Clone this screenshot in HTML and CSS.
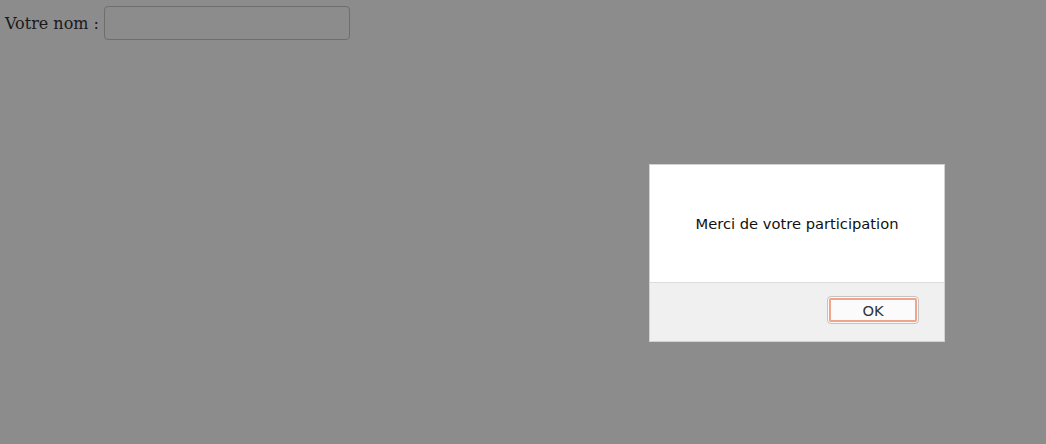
FILE: index.html
```html
<!DOCTYPE html>
<html lang="fr">
<head>
<meta charset="utf-8">
<link rel="stylesheet" href="styles.css">
</head>
<body>
<div class="page">
  <label class="field">Votre nom : <input class="name-input" type="text"></label>
</div>
<div class="dialog">
  <div class="dialog-body">Merci de votre participation</div>
  <div class="dialog-footer"><button class="ok-btn">OK</button></div>
</div>
</body>
</html>
```
FILE: styles.css
```css
html, body {
  margin: 0;
  padding: 0;
  width: 1046px;
  height: 444px;
  background: #8c8c8c;
  overflow: hidden;
}
.page {
  padding: 6px 0 0 5px;
}
.field {
  display: flex;
  align-items: center;
  gap: 5px;
  font-family: "DejaVu Serif", serif;
  font-size: 16px;
  color: #1a1a1a;
}
.name-input {
  box-sizing: border-box;
  width: 246px;
  height: 34px;
  margin: 0;
  border: 1px solid #6e6e6e;
  border-radius: 4px;
  background: #8c8c8c;
  outline: none;
}
.dialog {
  position: absolute;
  left: 649px;
  top: 164px;
  width: 294px;
  border: 1px solid #d2d2d2;
  font-family: "DejaVu Sans", sans-serif;
  font-size: 14.7px;
}
.dialog-body {
  height: 117px;
  background: #fff;
  color: #111;
  display: flex;
  align-items: center;
  justify-content: center;
  box-sizing: border-box;
}
.dialog-footer {
  height: 59px;
  background: #f0f0f0;
  border-top: 1px solid #dcdcdc;
  display: flex;
  justify-content: flex-end;
  align-items: flex-start;
  padding: 13px 25px 0 0;
  box-sizing: border-box;
}
.ok-btn {
  box-sizing: border-box;
  width: 92px;
  height: 28px;
  margin: 0;
  padding: 0;
  border: 1px solid #c4c4c4;
  border-radius: 4px;
  background: #fbfbfb;
  box-shadow: inset 0 0 0 1px #fbfbfb, inset 0 0 0 3px #f2a48a;
  font-family: "DejaVu Sans", sans-serif;
  font-size: 14.7px;
  color: #333;
}
```
